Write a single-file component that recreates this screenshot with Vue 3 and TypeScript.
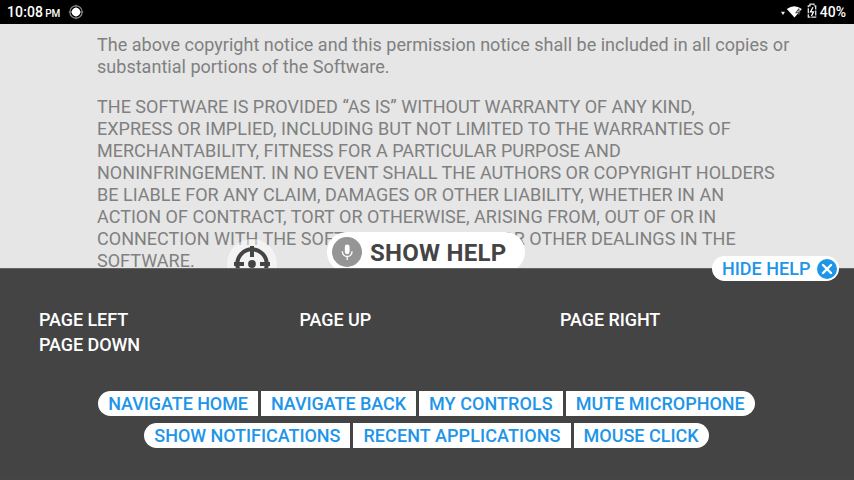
<script setup lang="ts">
interface Action {
  label: string
  tracking: number
}

const paragraphs: string[][] = [
  [
    'The above copyright notice and this permission notice shall be included in all copies or',
    'substantial portions of the Software.',
  ],
  [
    'THE SOFTWARE IS PROVIDED “AS IS” WITHOUT WARRANTY OF ANY KIND,',
    'EXPRESS OR IMPLIED, INCLUDING BUT NOT LIMITED TO THE WARRANTIES OF',
    'MERCHANTABILITY, FITNESS FOR A PARTICULAR PURPOSE AND',
    'NONINFRINGEMENT. IN NO EVENT SHALL THE AUTHORS OR COPYRIGHT HOLDERS',
    'BE LIABLE FOR ANY CLAIM, DAMAGES OR OTHER LIABILITY, WHETHER IN AN',
    'ACTION OF CONTRACT, TORT OR OTHERWISE, ARISING FROM, OUT OF OR IN',
    'CONNECTION WITH THE SOFTWARE OR THE USE OR OTHER DEALINGS IN THE',
    'SOFTWARE.',
  ],
]
const commands: string[] = ['PAGE LEFT', 'PAGE UP', 'PAGE RIGHT', 'PAGE DOWN']
const actionRows: Action[][] = [
  [
    { label: 'NAVIGATE HOME', tracking: -0.07 },
    { label: 'NAVIGATE BACK', tracking: -0.06 },
    { label: 'MY CONTROLS', tracking: 0.06 },
    { label: 'MUTE MICROPHONE', tracking: 0 },
  ],
  [
    { label: 'SHOW NOTIFICATIONS', tracking: -0.05 },
    { label: 'RECENT APPLICATIONS', tracking: 0.09 },
    { label: 'MOUSE CLICK', tracking: 0 },
  ],
]
</script>

<template>
  <div class="screen">
    <header class="status">
      <span class="time">10:08</span><span class="meridiem">PM</span>
      <svg class="target" width="16" height="16" viewBox="0 0 16 16">
        <circle cx="8" cy="8" r="6.2" fill="none" stroke="#999" stroke-width="1.1" />
        <path d="M8 0.8v3M8 12.2v3M0.8 8h3M12.2 8h3" stroke="#777" stroke-width="1.4" />
        <circle cx="8" cy="8" r="4.3" fill="#fff" />
      </svg>
      <span class="spacer"></span>
      <svg class="signals" width="37" height="18" viewBox="0 0 37 18">
        <path d="M1 8.8h4L3 12z" fill="#eee" />
        <path d="M6.8 6Q14.3 0.6 21.8 6L14.5 14.4z" fill="#fff" />
        <path d="M19 5.5l-3 4.3h4.4M19 5.8v6" fill="none" stroke="#555" stroke-width="1.1" />
        <path d="M30 1.2h4v1.6h1.7v11.4h-7.4V2.8H30z" fill="none" stroke="#e4e4e4" stroke-width="1.3" stroke-dasharray="5 1" />
        <path d="M33 4.2l-2.5 4.6h3l-2 4.2" fill="none" stroke="#fff" stroke-width="1.3" />
      </svg>
      <span class="battery">40%</span>
    </header>

    <main class="document">
      <p v-for="(lines, p) in paragraphs" :key="p">
        <span v-for="line in lines" :key="line" class="line">{{ line }}</span>
      </p>
      <div class="bubble">
        <svg width="50" height="50" viewBox="0 0 50 50">
          <circle cx="25" cy="25" r="14.7" fill="none" stroke="#444" stroke-width="4" />
          <path d="M25 7v11M25 32v11M7 25h10M33 25h10" stroke="#444" stroke-width="4" />
          <circle cx="25" cy="25" r="3.9" fill="#444" />
        </svg>
      </div>
      <div class="voice">
        <svg width="30" height="30" viewBox="0 0 30 30">
          <circle cx="15" cy="15" r="15" fill="#959595" />
          <rect x="12.8" y="7.6" width="4.8" height="9.6" rx="2.4" fill="#fff" />
          <path d="M10.4 14.2v.5a4.8 4.8 0 0 0 9.6 0v-.5M15.2 19.5v3.5" fill="none" stroke="#fff" stroke-width="1.3" />
        </svg>
        <span class="voice-label">SHOW HELP</span>
      </div>
    </main>

    <section class="help">
      <button class="hide">
        <span>HIDE HELP</span>
        <svg width="20" height="20" viewBox="0 0 20 20">
          <circle cx="10" cy="10" r="10" fill="#1e95e9" />
          <path d="M6 6l8 8M14 6l-8 8" stroke="#fff" stroke-width="2.4" stroke-linecap="round" />
        </svg>
      </button>
      <div class="commands">
        <span v-for="command in commands" :key="command">{{ command }}</span>
      </div>
      <div class="actions">
        <div v-for="(row, r) in actionRows" :key="r" class="row">
          <button
            v-for="action in row"
            :key="action.label"
            class="action"
            :style="{ letterSpacing: action.tracking + 'px' }"
          >{{ action.label }}</button>
        </div>
      </div>
    </section>
  </div>
</template>

<style>
body {
  background: #444;
  overflow: hidden;
}
</style>

<style scoped>
.screen {
  width: 854px;
  height: 480px;
  display: flex;
  flex-direction: column;
  overflow: hidden;
  font-family: Roboto, "Liberation Sans", sans-serif;
}
button {
  border: 0;
  margin: 0;
  font: inherit;
}
.status {
  flex: none;
  height: 24px;
  box-sizing: border-box;
  padding: 0 8px 0 7px;
  display: flex;
  align-items: center;
  background: #000;
  color: #fff;
  font-size: 14px;
  font-weight: 500;
  white-space: nowrap;
}
.time {
  letter-spacing: 0.12px;
}
.meridiem {
  font-size: 10px;
  padding: 3px 0 0 2px;
}
.target {
  margin-left: 8px;
}
.spacer {
  flex: 1;
}
.signals {
  margin-right: 3px;
}
.document {
  position: relative;
  flex: none;
  height: 244px;
  box-sizing: border-box;
  padding: 10px 0 0 97px;
  overflow: hidden;
  background: #e6e6e6;
  color: #808080;
  font-size: 18px;
  line-height: 22px;
  letter-spacing: 0.022px;
}
.document p {
  margin: 0 0 18px;
}
.line {
  display: block;
  white-space: nowrap;
}
.bubble {
  position: absolute;
  left: 227px;
  top: 215px;
  width: 50px;
  height: 50px;
  border-radius: 50%;
  background: rgba(255, 255, 255, 0.5);
}
.voice {
  position: absolute;
  left: 327px;
  top: 208px;
  width: 198px;
  height: 40px;
  box-sizing: border-box;
  padding-left: 5px;
  display: flex;
  align-items: center;
  gap: 8px;
  border-radius: 20px;
  background: #fff;
  color: #444;
  font-size: 24px;
  font-weight: 700;
  letter-spacing: 0.25px;
  white-space: nowrap;
}
.voice-label {
  padding-top: 2px;
}
.help {
  position: relative;
  flex: 1;
  box-sizing: border-box;
  padding: 38px 33px 0 39px;
  background: #444;
  border-top: 1px solid #616463;
  border-bottom: 1px solid #4a4447;
  color: #fff;
  font-size: 18px;
  font-weight: 500;
}
.hide {
  position: absolute;
  right: 15px;
  top: -13px;
  width: 127px;
  height: 25px;
  padding: 0 2px 0 10px;
  display: flex;
  align-items: center;
  justify-content: space-between;
  border-radius: 13px;
  background: #fff;
  color: #1e95e9;
  white-space: nowrap;
}
.commands {
  display: grid;
  grid-template-columns: repeat(3, 260.5px);
  line-height: 25px;
  letter-spacing: -0.08px;
}
.actions {
  display: flex;
  flex-direction: column;
  align-items: center;
  gap: 7px;
  margin: 34px 1px 0 0;
  padding-right: 6px;
}
.row {
  display: flex;
  gap: 3px;
}
.action {
  height: 25px;
  padding: 0 10px;
  background: #fff;
  color: #1e95e9;
  line-height: 25px;
  white-space: nowrap;
}
.action:first-child {
  border-radius: 13px 0 0 13px;
}
.action:last-child {
  border-radius: 0 13px 13px 0;
}
</style>
